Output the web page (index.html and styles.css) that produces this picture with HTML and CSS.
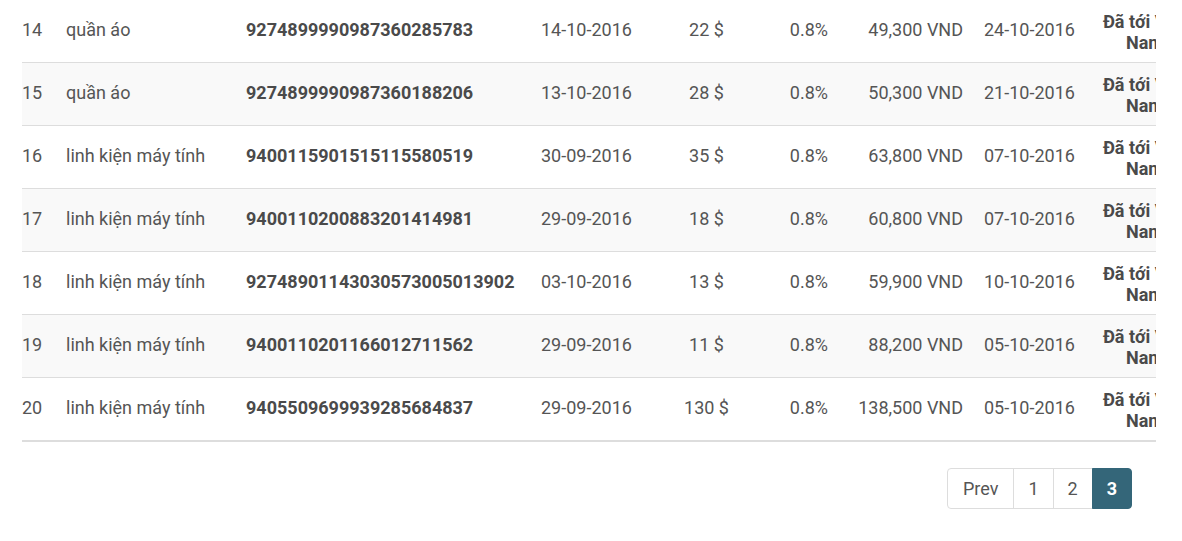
FILE: index.html
```html
<!DOCTYPE html>
<html lang="vi">
<head>
<meta charset="utf-8">
<title>Đơn hàng</title>
<link rel="stylesheet" href="styles.css">
</head>
<body>
<div class="table-wrap">
  <table class="orders">
    <colgroup>
      <col class="c-num"><col class="c-name"><col class="c-track"><col class="c-date"><col class="c-amt"><col class="c-pct"><col class="c-vnd"><col class="c-date2"><col class="c-status">
    </colgroup>
    <tbody>
      <tr><td>14</td><td>quần áo</td><td class="track">9274899990987360285783</td><td>14-10-2016</td><td class="center">22 $</td><td class="pct">0.8%</td><td class="vnd">49,300 VND</td><td class="date2">24-10-2016</td><td class="status">Đã tới Việt Nam</td></tr>
      <tr class="alt"><td>15</td><td>quần áo</td><td class="track">9274899990987360188206</td><td>13-10-2016</td><td class="center">28 $</td><td class="pct">0.8%</td><td class="vnd">50,300 VND</td><td class="date2">21-10-2016</td><td class="status">Đã tới Việt Nam</td></tr>
      <tr><td>16</td><td>linh kiện máy tính</td><td class="track">9400115901515115580519</td><td>30-09-2016</td><td class="center">35 $</td><td class="pct">0.8%</td><td class="vnd">63,800 VND</td><td class="date2">07-10-2016</td><td class="status">Đã tới Việt Nam</td></tr>
      <tr class="alt"><td>17</td><td>linh kiện máy tính</td><td class="track">9400110200883201414981</td><td>29-09-2016</td><td class="center">18 $</td><td class="pct">0.8%</td><td class="vnd">60,800 VND</td><td class="date2">07-10-2016</td><td class="status">Đã tới Việt Nam</td></tr>
      <tr><td>18</td><td>linh kiện máy tính</td><td class="track">92748901143030573005013902</td><td>03-10-2016</td><td class="center">13 $</td><td class="pct">0.8%</td><td class="vnd">59,900 VND</td><td class="date2">10-10-2016</td><td class="status">Đã tới Việt Nam</td></tr>
      <tr class="alt"><td>19</td><td>linh kiện máy tính</td><td class="track">9400110201166012711562</td><td>29-09-2016</td><td class="center">11 $</td><td class="pct">0.8%</td><td class="vnd">88,200 VND</td><td class="date2">05-10-2016</td><td class="status">Đã tới Việt Nam</td></tr>
      <tr class="last"><td>20</td><td>linh kiện máy tính</td><td class="track">9405509699939285684837</td><td>29-09-2016</td><td class="center">130 $</td><td class="pct">0.8%</td><td class="vnd">138,500 VND</td><td class="date2">05-10-2016</td><td class="status">Đã tới Việt Nam</td></tr>
    </tbody>
  </table>
</div>
<div class="pager-row">
  <ul class="pagination">
    <li><a href="#">Prev</a></li>
    <li><a href="#">1</a></li>
    <li><a href="#">2</a></li>
    <li class="active"><a href="#">3</a></li>
  </ul>
</div>
</body>
</html>
```

FILE: styles.css
```css
html, body {
  margin: 0;
  padding: 0;
  background: #fff;
}
body {
  font-family: Roboto, "Liberation Sans", Arial, sans-serif;
  font-size: 18px;
  line-height: 21px;
  color: #555;
}
.table-wrap {
  margin-left: 22px;
  width: 1134px;
  overflow: hidden;
}
.orders {
  border-collapse: collapse;
  table-layout: fixed;
  width: 1194px;
  margin-left: -8px;
}
.c-num { width: 44px; }
.c-name { width: 180px; }
.c-track { width: 295px; }
.c-date { width: 126px; }
.c-amt { width: 95px; }
.c-pct { width: 88px; }
.c-vnd { width: 121px; }
.c-date2 { width: 119px; }
.c-status { width: 126px; }
.orders td {
  padding: 8px 8px 12px;
  height: 42px;
  border-bottom: 1px solid #ddd;
  vertical-align: middle;
  white-space: nowrap;
  text-align: left;
}
.orders tr.alt td { background: #f9f9f9; }
.orders tr.last td { border-bottom: 2px solid #ddd; }
.orders td.track { font-weight: 700; color: #4a4a4a; }
.orders td.center { text-align: center; }
.orders td.pct { text-align: right; padding-right: 14px; }
.orders td.vnd { text-align: right; padding-left: 0; padding-right: 0; }
.orders td.date2 { padding-left: 21px; }
.orders td.status {
  padding: 11px 8px 9px;
  white-space: normal;
  text-align: center;
  font-weight: 700;
  color: #4a4a4a;
}
.pager-row {
  display: flex;
  justify-content: flex-end;
  width: 1132px;
  margin-top: 26px;
}
.pagination {
  display: flex;
  list-style: none;
  margin: 0;
  padding: 0;
}
.pagination a {
  display: block;
  padding: 9px 14px;
  border: 1px solid #ddd;
  margin-left: -1px;
  color: #555;
  text-decoration: none;
  background: #fff;
}
.pagination li:first-child a {
  margin-left: 0;
  padding: 9px 15px;
  border-radius: 4px 0 0 4px;
}
.pagination li:last-child a { border-radius: 0 4px 4px 0; }
.pagination li.active a {
  background: #346679;
  border-color: #346679;
  color: #fff;
  font-weight: 700;
}
```
